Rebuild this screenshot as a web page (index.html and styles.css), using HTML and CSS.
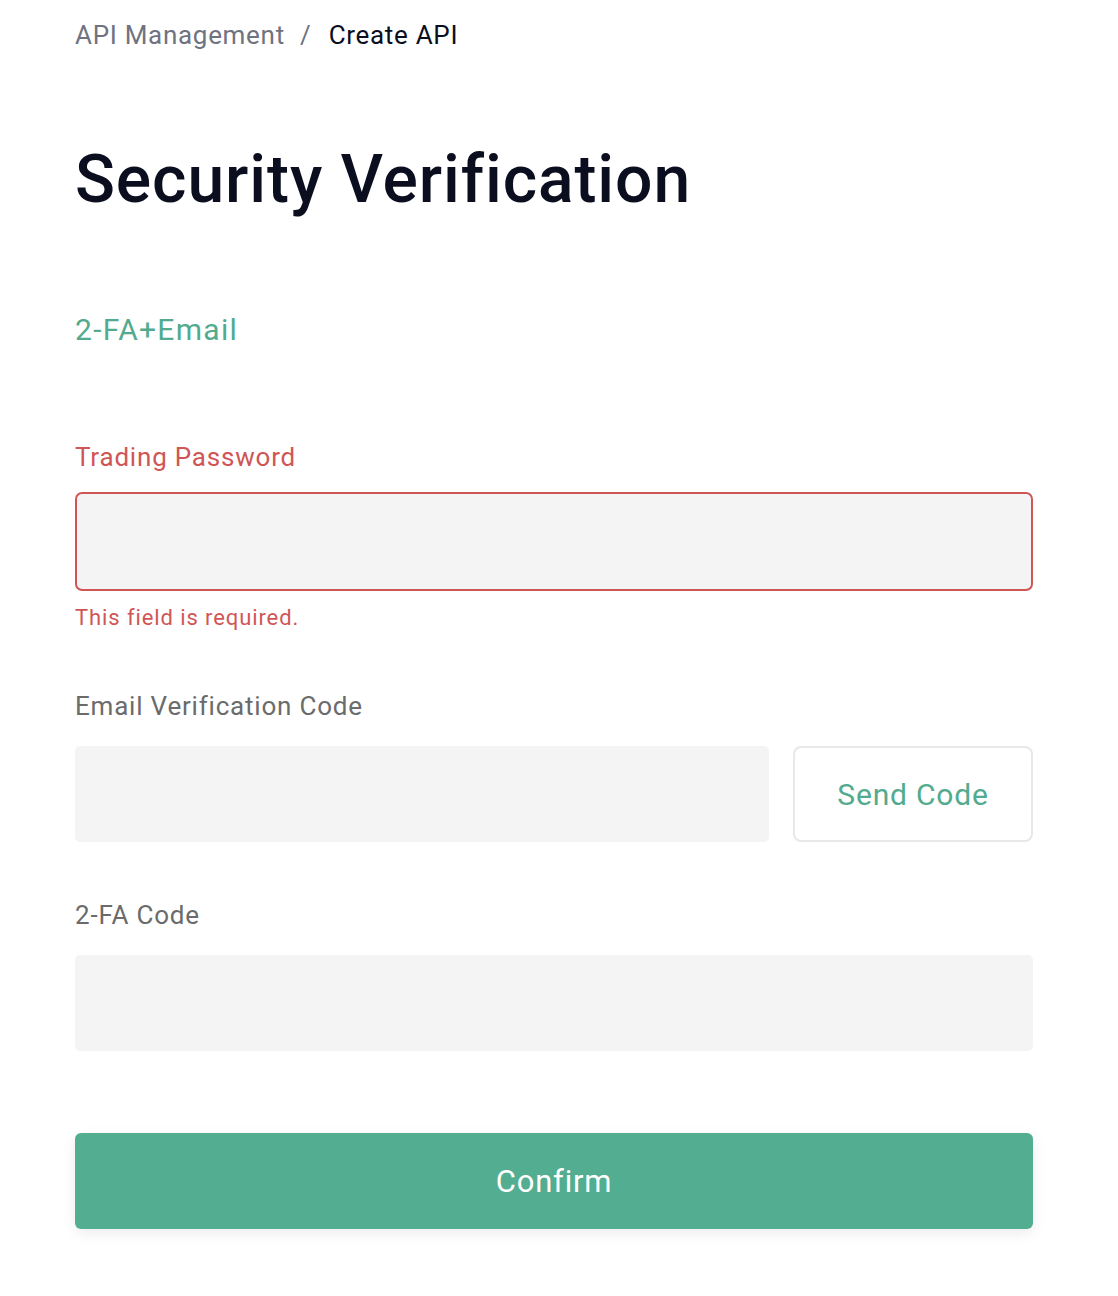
FILE: index.html
```html
<!DOCTYPE html>
<html lang="en">
<head>
    <meta charset="UTF-8">
    <title>Security Verification</title>
    <link rel="stylesheet" href="styles.css">
</head>
<body>
    <div class="container">
        <div class="breadcrumb">
            <a href="#" class="crumb">API Management</a>
            <span class="crumb-sep">/</span>
            <span class="crumb-current">Create API</span>
        </div>

        <h1 class="page-title">Security Verification</h1>

        <div class="method">2-FA+Email</div>

        <form class="verify-form">
            <div class="field has-error">
                <label class="field-label">Trading Password</label>
                <input type="password" class="field-input">
                <div class="field-error">This field is required.</div>
            </div>

            <div class="field">
                <label class="field-label">Email Verification Code</label>
                <div class="input-row">
                    <input type="text" class="field-input">
                    <button type="button" class="send-btn">Send Code</button>
                </div>
            </div>

            <div class="field">
                <label class="field-label">2-FA Code</label>
                <input type="text" class="field-input">
            </div>

            <button type="button" class="confirm-btn">Confirm</button>
        </form>
    </div>
</body>
</html>
```

FILE: styles.css
```css
body {
    font-family: Roboto, "Noto Sans", sans-serif;
    margin: 0;
    padding: 0;
    background-color: #fff;
    color: #0b0e1f;
}

.container {
    width: 958px;
    padding: 16px 0 60px 75px;
}

/* breadcrumb */
.breadcrumb {
    font-size: 26px;
    line-height: 38px;
    letter-spacing: 0.7px;
}

.crumb {
    color: #6f7380;
    text-decoration: none;
}

.crumb-sep {
    color: #6f7380;
    margin: 0 10px 0 8px;
}

.crumb-current {
    color: #0b0e1f;
}

.page-title {
    font-size: 66px;
    font-weight: 500;
    line-height: 80px;
    margin: 86px 0 0 0;
    letter-spacing: 0.9px;
}

.method {
    color: #52ab8e;
    font-size: 30px;
    line-height: 40px;
    margin-top: 90px;
    letter-spacing: 1.3px;
}

.verify-form {
    margin-top: 89px;
}

.field {
    margin-bottom: 55px;
}

.field-label {
    display: block;
    font-size: 26px;
    line-height: 36px;
    color: #6b6b6b;
    margin-bottom: 22px;
    letter-spacing: 0.8px;
}

.field-input {
    display: block;
    width: 100%;
    height: 96px;
    box-sizing: border-box;
    background-color: #f4f4f4;
    border: 2px solid #f4f4f4;
    border-radius: 5px;
    outline: none;
}

.has-error .field-label {
    color: #d05656;
    margin-bottom: 17px;
}

.has-error .field-input {
    height: 99px;
    border-color: #d05656;
    border-radius: 7px;
}

.field-error {
    color: #d05656;
    font-size: 22px;
    line-height: 30px;
    margin-top: 12px;
    letter-spacing: 0.9px;
}

.has-error {
    margin-bottom: 55px;
}

.input-row {
    display: flex;
    gap: 24px;
}

.input-row .field-input {
    flex: 1;
}

.send-btn {
    width: 240px;
    height: 96px;
    flex-shrink: 0;
    background-color: #fff;
    border: 2px solid #e8e8e8;
    border-radius: 8px;
    color: #52ab8e;
    font-family: Roboto, "Noto Sans", sans-serif;
    font-size: 30px;
    letter-spacing: 0.8px;
}

.confirm-btn {
    display: block;
    width: 100%;
    height: 96px;
    margin-top: 82px;
    background-color: #53ad90;
    border: none;
    border-radius: 6px;
    color: #fff;
    font-family: Roboto, "Noto Sans", sans-serif;
    font-size: 31px;
    letter-spacing: 0.8px;
    box-shadow: 0 4px 14px rgba(0, 0, 0, 0.08);
}
```
